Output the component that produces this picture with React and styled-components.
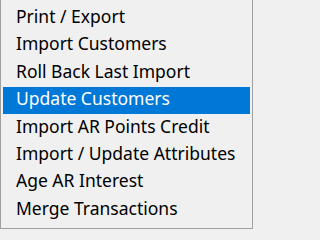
import styled, { createGlobalStyle } from 'styled-components'

const items = [
    'Print / Export',
    'Import Customers',
    'Roll Back Last Import',
    'Update Customers',
    'Import AR Points Credit',
    'Import / Update Attributes',
    'Age AR Interest',
    'Merge Transactions',
]

const GlobalStyle = createGlobalStyle`
    html, body {
        margin:0;
        padding:0;
        background:#f0f0f0;
    }
`

function App() {
    return (
        <>
            <GlobalStyle />
            <Menu>
                {items.map((label, i) => (
                    <Item key={label} active={i === 3 ? 1 : 0}>{label}</Item>
                ))}
            </Menu>
        </>
    )
}

export default App

const Menu = styled.ul`
    list-style:none;
    margin:0;
    width:253px;
    height:229px;
    box-sizing:border-box;
    padding:4.7px 2px 0 2px;
    background:#f0f0f0;
    border:1px solid #a0a0a0;
    border-top:none;
    font-family:"Noto Sans", "Open Sans", sans-serif;
    font-size:17.5px;
`

const Item = styled.li`
    height:27.43px;
    box-sizing:border-box;
    display:flex;
    align-items:center;
    padding:0 0 5px 13px;
    color:${p => p.active ? '#fff' : '#000'};
    background:${p => p.active ? '#0078d7' : 'transparent'};
    white-space:nowrap;
`
